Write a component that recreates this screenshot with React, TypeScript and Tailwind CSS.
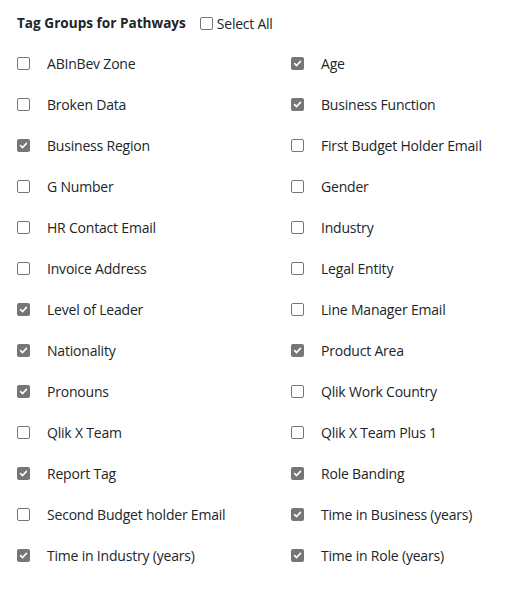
import React from "react";

const items: [string, boolean][] = [
  ["ABInBev Zone", false],
  ["Age", true],
  ["Broken Data", false],
  ["Business Function", true],
  ["Business Region", true],
  ["First Budget Holder Email", false],
  ["G Number", false],
  ["Gender", false],
  ["HR Contact Email", false],
  ["Industry", false],
  ["Invoice Address", false],
  ["Legal Entity", false],
  ["Level of Leader", true],
  ["Line Manager Email", false],
  ["Nationality", true],
  ["Product Area", true],
  ["Pronouns", true],
  ["Qlik Work Country", false],
  ["Qlik X Team", false],
  ["Qlik X Team Plus 1", false],
  ["Report Tag", true],
  ["Role Banding", true],
  ["Second Budget holder Email", false],
  ["Time in Business (years)", true],
  ["Time in Industry (years)", true],
  ["Time in Role (years)", true],
];

function Box({ checked }: { checked: boolean }) {
  if (checked) {
    return (
      <span className="flex h-[13px] w-[13px] shrink-0 items-center justify-center rounded-[2px] bg-[#767676]">
        <svg width="9" height="9" viewBox="0 0 10 10">
          <path d="M1.8 5.2 L4 7.3 L8.3 2.6" fill="none" stroke="white" strokeWidth="1.8" strokeLinecap="round" strokeLinejoin="round" />
        </svg>
      </span>
    );
  }
  return <span className="h-[13px] w-[13px] shrink-0 rounded-[2px] border border-[#767676] bg-white" />;
}

export default function App() {
  return (
    <div className="min-h-[591px] w-[529px] bg-white pl-[17px] pt-[14px] text-[#212529]" style={{ fontFamily: '"Open Sans", "Noto Sans", sans-serif' }}>
      <div className="flex h-[18px] items-center">
        <span className="text-[13.6px] font-bold">Tag Groups for Pathways</span>
        <span className="ml-[14px] flex items-center">
          <Box checked={false} />
          <span className="ml-[4px] text-[14px] tracking-[-0.25px]">Select All</span>
        </span>
      </div>
      <div className="mt-[11px] grid grid-cols-[274px_1fr]">
        {items.map(([label, checked]) => (
          <div key={label} className="flex h-[41px] items-center">
            <Box checked={checked} />
            <span className="ml-[17px] text-[14px] tracking-[-0.2px]">{label}</span>
          </div>
        ))}
      </div>
    </div>
  );
}
